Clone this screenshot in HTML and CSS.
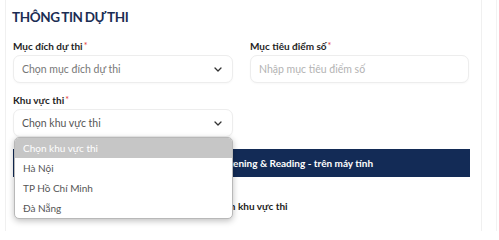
FILE: index.html
```html
<!DOCTYPE html>
<html lang="vi">
<head>
<meta charset="utf-8">
<title>Thông tin dự thi</title>
<link rel="stylesheet" href="styles.css">
</head>
<body>
<div class="page">
  <section class="card">
    <h2 class="title">THÔNG TIN DỰ THI</h2>
    <div class="grid">
      <div class="field">
        <label class="label">Mục đích dự thi<span class="req">*</span></label>
        <div class="control select">
          <span class="value">Chọn mục đích dự thi</span>
          <svg class="chev" width="8" height="5" viewBox="0 0 8 5"><path d="M1 1l3 3 3-3" fill="none" stroke="#333" stroke-width="1.3" stroke-linecap="round" stroke-linejoin="round"/></svg>
        </div>
      </div>
      <div class="field">
        <label class="label">Mục tiêu điểm số<span class="req">*</span></label>
        <div class="control input">
          <span class="placeholder">Nhập mục tiêu điểm số</span>
        </div>
      </div>
      <div class="field">
        <label class="label">Khu vực thi<span class="req">*</span></label>
        <div class="select-wrap">
          <div class="control select">
            <span class="value dark">Chọn khu vực thi</span>
            <svg class="chev" width="8" height="5" viewBox="0 0 8 5"><path d="M1 1l3 3 3-3" fill="none" stroke="#333" stroke-width="1.3" stroke-linecap="round" stroke-linejoin="round"/></svg>
          </div>
          <ul class="dropdown">
            <li class="opt active">Chọn khu vực thi</li>
            <li class="opt">Hà Nội</li>
            <li class="opt">TP Hồ Chí Minh</li>
            <li class="opt">Đà Nẵng</li>
          </ul>
        </div>
      </div>
    </div>
    <div class="exam-bar">Lịch thi TOEIC Listening &amp; Reading - trên máy tính</div>
    <p class="notice">Vui lòng chọn khu vực thi</p>
  </section>
  <aside class="side"></aside>
</div>
</body>
</html>
```
FILE: styles.css
```css
* { box-sizing: border-box; }
html, body { margin: 0; padding: 0; background: #fff; }
body {
  font-family: Lato, "Noto Sans", sans-serif;
  color: #222;
  width: 499px;
  height: 231px;
  overflow: hidden;
}
.page {
  display: flex;
  padding-left: 5px;
  height: 231px;
}
.card {
  width: 477px;
  flex: none;
  border-left: 1px solid #f0f0f0;
  border-right: 1px solid #f0f0f0;
  padding: 8px 11px 0 7px;
}
.side {
  flex: 1;
  border-right: 1px solid #f2f2f2;
  margin-right: 2px;
}
.title {
  margin: 0 0 0 -1px;
  font-size: 13.5px;
  line-height: 18px;
  font-weight: 700;
  color: #1b2d54;
  letter-spacing: -0.4px;
  word-spacing: -0.8px;
}
.grid {
  display: grid;
  grid-template-columns: 220px 219px;
  column-gap: 17px;
  row-gap: 10px;
  margin-top: 13px;
}
.label {
  display: block;
  font-size: 10px;
  line-height: 14px;
  font-weight: 700;
  color: #1f1f1f;
  margin-bottom: 2px;
}
.req { color: #e53935; font-weight: 400; margin-left: 1px; font-size: 9px; vertical-align: 1px; }
.control {
  height: 28px;
  border: 1px solid #ededed;
  border-radius: 7px;
  background: #fff;
  display: flex;
  align-items: center;
  padding: 0 9px 0 8px;
  font-size: 10.5px;
  box-shadow: 0 1px 2px rgba(0,0,0,0.03);
}
.select { justify-content: space-between; }
.value { color: #777; }
.value.dark { color: #555; }
.placeholder { color: #b3b3b3; }
.chev { margin-right: 1px; }
.select-wrap { position: relative; }
.dropdown {
  position: absolute;
  top: 28px;
  left: 1px;
  width: 219px;
  margin: 0;
  padding: 0;
  list-style: none;
  background: #fff;
  border: 1px solid #b8b8b8;
  border-radius: 5px;
  box-shadow: 0 2px 6px rgba(0,0,0,0.25);
  overflow: hidden;
  z-index: 5;
}
.opt {
  height: 20px;
  line-height: 20px;
  padding-left: 8px;
  font-size: 10px;
  color: #555;
}
.opt.active { background: #c6c6c6; color: #fff; }
.exam-bar {
  margin-top: 12px;
  height: 28px;
  width: 457px;
  background: #132b56;
  color: #fff;
  font-size: 10px;
  font-weight: 700;
  line-height: 28px;
  padding-left: 138px;
}
.notice {
  margin: 22px 0 0;
  font-size: 10px;
  line-height: 14px;
  font-weight: 700;
  color: #222;
  padding-left: 162px;
}
```
